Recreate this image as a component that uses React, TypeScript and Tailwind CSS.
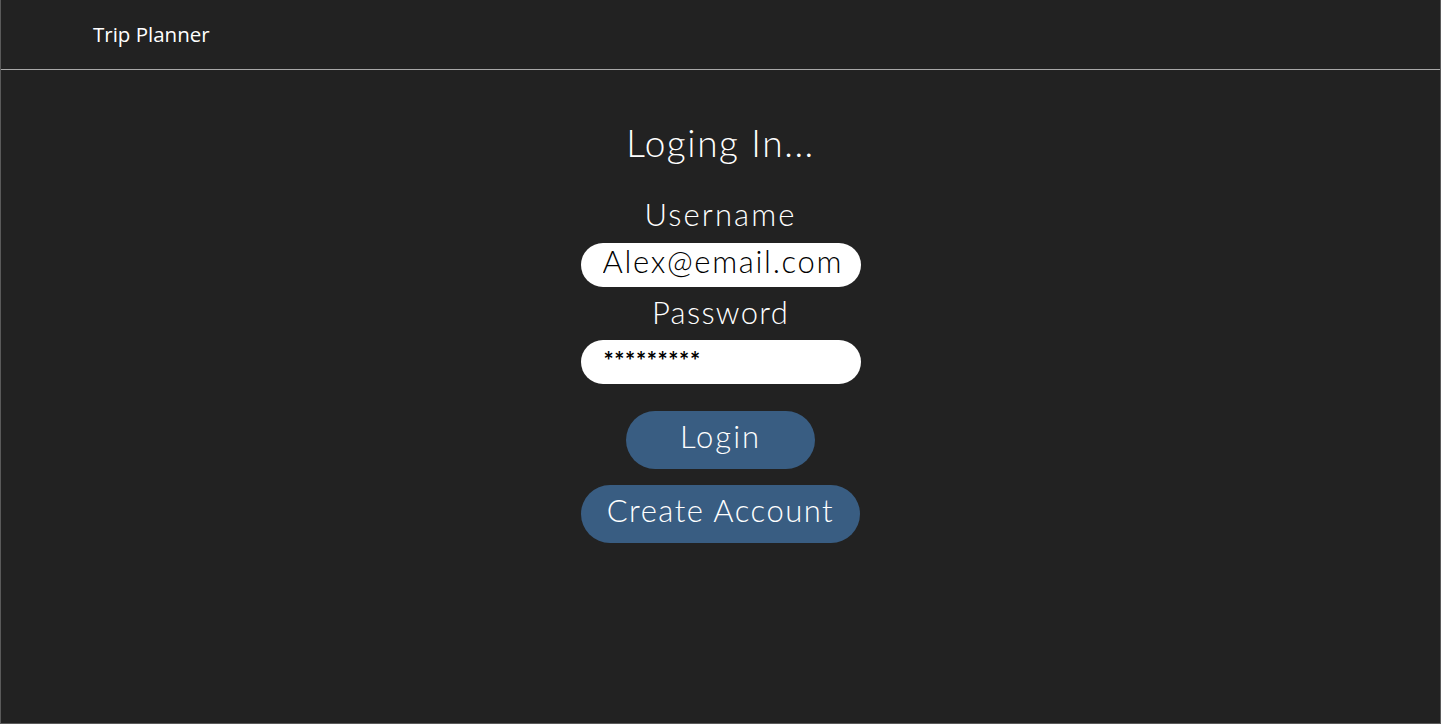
import { useState } from "react";

const rounded = { fontFamily: "Lato, 'Noto Sans', sans-serif" };

export default function App() {
  const [username, setUsername] = useState("Alex@email.com");
  const [password, setPassword] = useState("*********");

  return (
    <div className="h-[724px] bg-[#222222] border-x border-b border-[#5a5a5a] overflow-hidden">
      {/* HEADER */}
      <header className="h-[70px] border-b border-[#a8a8a8] flex items-center px-[92px] pb-[1px]">
        <span
          className="text-[20.5px] text-white"
          style={{ fontFamily: "'Open Sans', 'Noto Sans', sans-serif" }}
        >
          Trip Planner
        </span>
      </header>

      {/* LOGIN FORM */}
      <main className="flex flex-col items-center pt-[53px] text-white font-light" style={rounded}>
        <h1 className="text-[37px] leading-[40px] h-[40px] tracking-[1.6px]">Loging In...</h1>

        <label className="mt-[33px] text-[31px] leading-[36px] h-[36px] tracking-[2.1px]">Username</label>
        <input
          value={username}
          onChange={(e) => setUsername(e.target.value)}
          className="mt-[11px] w-[280px] h-[44px] rounded-full bg-white text-black text-[31px] font-light tracking-[1.7px] pl-[22px] pb-[7px] outline-none"
          style={rounded}
        />

        <label className="mt-[7px] text-[31px] leading-[36px] h-[36px] tracking-[1.3px]">Password</label>
        <input
          value={password}
          onChange={(e) => setPassword(e.target.value)}
          className="mt-[10px] w-[280px] h-[44px] rounded-full bg-white text-black text-[24px] pl-[23px] pb-[3px] outline-none font-bold tracking-[0.6px]"
          style={rounded}
        />

        <button className="mt-[27px] w-[189px] h-[58px] rounded-full bg-[#395d82] text-white text-[31px] tracking-[2px] pb-[8px]">
          Login
        </button>
        <button className="mt-[16px] w-[279px] h-[58px] rounded-full bg-[#395d82] text-white text-[31px] tracking-[1.5px] pb-[8px]">
          Create Account
        </button>
      </main>
    </div>
  );
}
